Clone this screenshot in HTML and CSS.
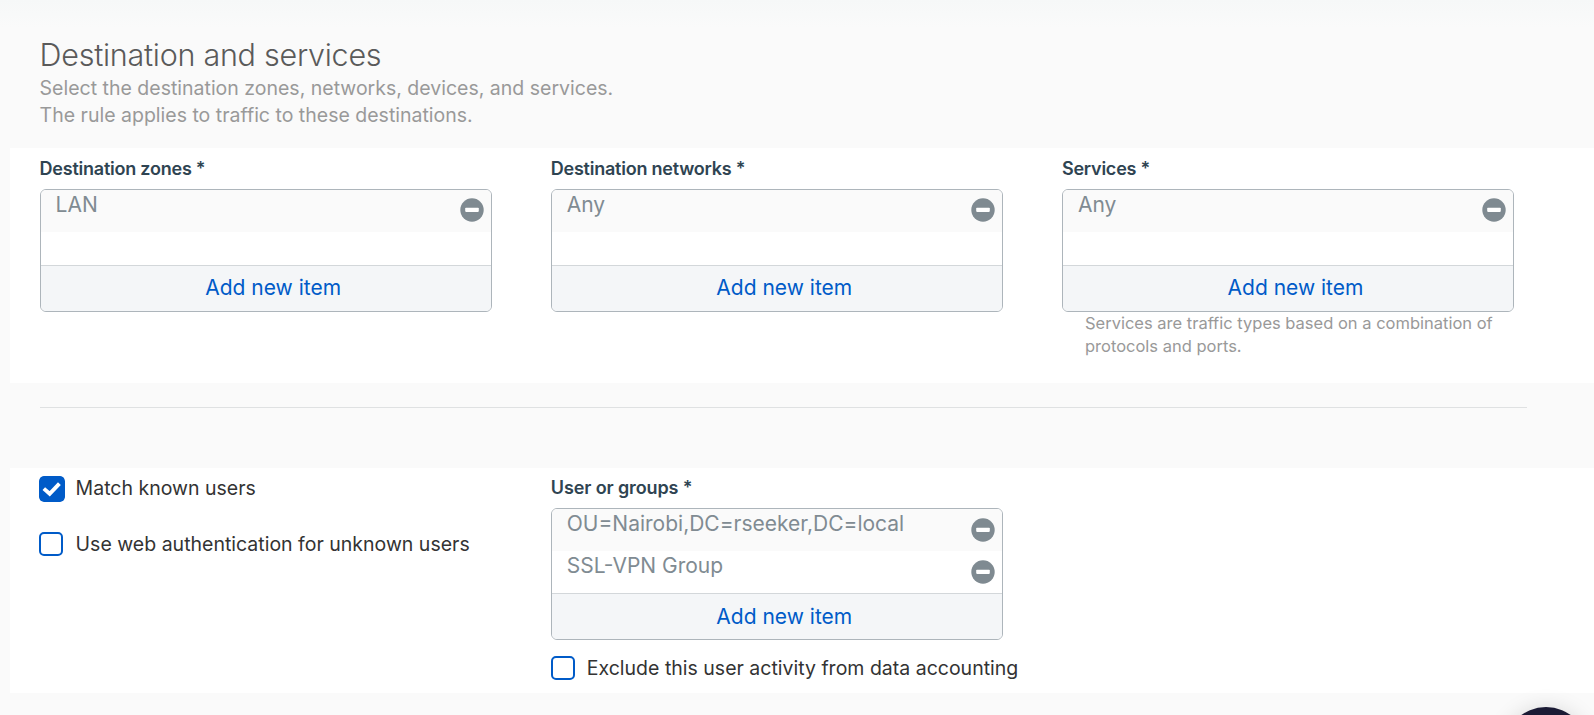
FILE: index.html
```html
<!DOCTYPE html>
<html lang="en">
<head>
<meta charset="utf-8">
<title>Destination and services</title>
<link rel="stylesheet" href="styles.css">
</head>
<body>
<svg class="defs" width="0" height="0">
  <symbol id="minus" viewBox="0 0 24 24"><circle cx="12" cy="12" r="11.7" fill="#7f8a91"/><rect x="5.2" y="9.8" width="13.6" height="4.1" rx="0.8" fill="#fff"/></symbol>
</svg>
<main class="page">
  <header class="intro">
    <h1 class="title"><span>Destination and services</span></h1>
    <p class="lead"><span class="l1">Select the destination zones, networks, devices, and services.</span><br><span class="l2">The rule applies to traffic to these destinations.</span></p>
  </header>

  <section class="panel destinations">
    <div class="field">
      <h2 class="label"><span>Destination zones *</span></h2>
      <div class="picker">
        <ul class="items"><li class="item"><span>LAN</span><svg class="remove"><use href="#minus"/></svg></li></ul>
        <button class="add"><span>Add new item</span></button>
      </div>
    </div>
    <div class="field">
      <h2 class="label"><span>Destination networks *</span></h2>
      <div class="picker">
        <ul class="items"><li class="item"><span>Any</span><svg class="remove"><use href="#minus"/></svg></li></ul>
        <button class="add"><span>Add new item</span></button>
      </div>
    </div>
    <div class="field">
      <h2 class="label"><span>Services *</span></h2>
      <div class="picker">
        <ul class="items"><li class="item"><span>Any</span><svg class="remove"><use href="#minus"/></svg></li></ul>
        <button class="add"><span>Add new item</span></button>
      </div>
      <p class="hint"><span>Services are traffic types based on a combination of<br>protocols and ports.</span></p>
    </div>
  </section>

  <hr class="divider">

  <section class="panel users">
    <div class="options">
      <label class="check"><svg class="box checked" viewBox="0 0 26 26"><rect width="26" height="26" rx="4.5" fill="#005bc8"/><path d="M4.8 12.6l5.9 5.2L20.4 7.6" fill="none" stroke="#fff" stroke-width="3.9"/></svg><span>Match known users</span></label>
      <label class="check"><i class="box"></i><span>Use web authentication for unknown users</span></label>
    </div>
    <div class="field">
      <h2 class="label"><span>User or groups *</span></h2>
      <div class="picker">
        <ul class="items"><li class="item"><span>OU=Nairobi,DC=rseeker,DC=local</span><svg class="remove"><use href="#minus"/></svg></li><li class="item"><span>SSL-VPN Group</span><svg class="remove"><use href="#minus"/></svg></li></ul>
        <button class="add"><span>Add new item</span></button>
      </div>
      <label class="check exclude"><i class="box"></i><span>Exclude this user activity from data accounting</span></label>
    </div>
  </section>
</main>
<div class="corner"><div class="fab"></div></div>
</body>
</html>
```

FILE: styles.css
```css
* { box-sizing: border-box; }
body {
  position: relative;
  margin: 0;
  height: 715px;
  overflow: hidden;
  background: #fafafa;
  font-family: Inter, "Liberation Sans", sans-serif;
  color: #333;
}
h1, h2, p, ul { margin: 0; padding: 0; font-weight: 400; }
.defs { display: block; height: 0; }
.page { padding-left: 10px; }
.intro {
  height: 148px;
  margin-left: -10px;
  padding: 36px 0 0 39.6px;
  background: linear-gradient(#f6f8f8, #fafafa 28px);
}
.title {
  margin-bottom: 1px;
  font-size: 30.5px;
  font-weight: 300;
  letter-spacing: -0.27px;
  line-height: 38px;
  color: #5a5a5a;
}
.lead {
  font-size: 19.5px;
  line-height: 27px;
  color: #999;
  white-space: nowrap;
}
.panel {
  display: grid;
  grid-template-columns: 452px 452px 452px;
  column-gap: 59.2px;
  padding-left: 29.6px;
  background: #fff;
}
.destinations { height: 235px; }
.users { height: 225px; }
.label {
  height: 41px;
  padding-top: 9px;
  font-size: 18px;
  font-weight: 600;
  letter-spacing: -0.23px;
  line-height: 24px;
  color: #2f4452;
  white-space: nowrap;
}
.users .label { height: 40px; padding-top: 8px; letter-spacing: -0.12px; }
.picker {
  border: 1px solid #adb5bb;
  border-radius: 6px;
  overflow: hidden;
}
.items { min-height: 75px; list-style: none; }
.item {
  display: flex;
  justify-content: space-between;
  height: 42px;
  padding: 0 7px 0 15px;
  font-size: 21px;
  line-height: 30px;
  color: #808b92;
}
.item:first-child { background: #fafafa; }
.remove { width: 24px; height: 24px; margin-top: 8px; }
.users .remove { margin-top: 9px; }
.add {
  display: block;
  width: 100%;
  height: 46px;
  padding: 0 0 2px 15px;
  border: 0;
  border-top: 1px solid #d3d7da;
  background: #f4f6f8;
  font: 21px/43px Inter, sans-serif;
  color: #005bc8;
}
.users .add { padding-bottom: 0; }
.hint {
  padding: 0 0 0 23px;
  font-size: 16.5px;
  line-height: 23px;
  color: #999;
  white-space: nowrap;
}
.divider {
  width: 1487px;
  height: 1px;
  margin: 24px 0 60px 30px;
  border: 0;
  background: #dfe1e2;
}
.options { padding-top: 8px; }
.check {
  display: flex;
  align-items: flex-start;
  height: 56px;
  font-size: 19.5px;
  line-height: 25px;
  white-space: nowrap;
}
.box {
  flex: none;
  width: 24px;
  height: 24px;
  margin-right: 12px;
  border: 2px solid #005bc8;
  border-radius: 5px;
}
.options .box { margin-left: -0.4px; margin-right: 12.4px; }
.options .box.checked { width: 26px; height: 26px; margin-right: 10.4px; border: 0; }
.exclude { height: 24px; margin-top: 16px; }
.corner {
  position: absolute;
  right: 0;
  bottom: 0;
  width: 130px;
  height: 50px;
  overflow: hidden;
}
.fab {
  width: 84px;
  height: 84px;
  margin: 42px 0 0 40px;
  border-radius: 50%;
  background: #1b1b35;
  box-shadow: 0 2px 22px rgba(0, 0, 0, .15);
}
```
